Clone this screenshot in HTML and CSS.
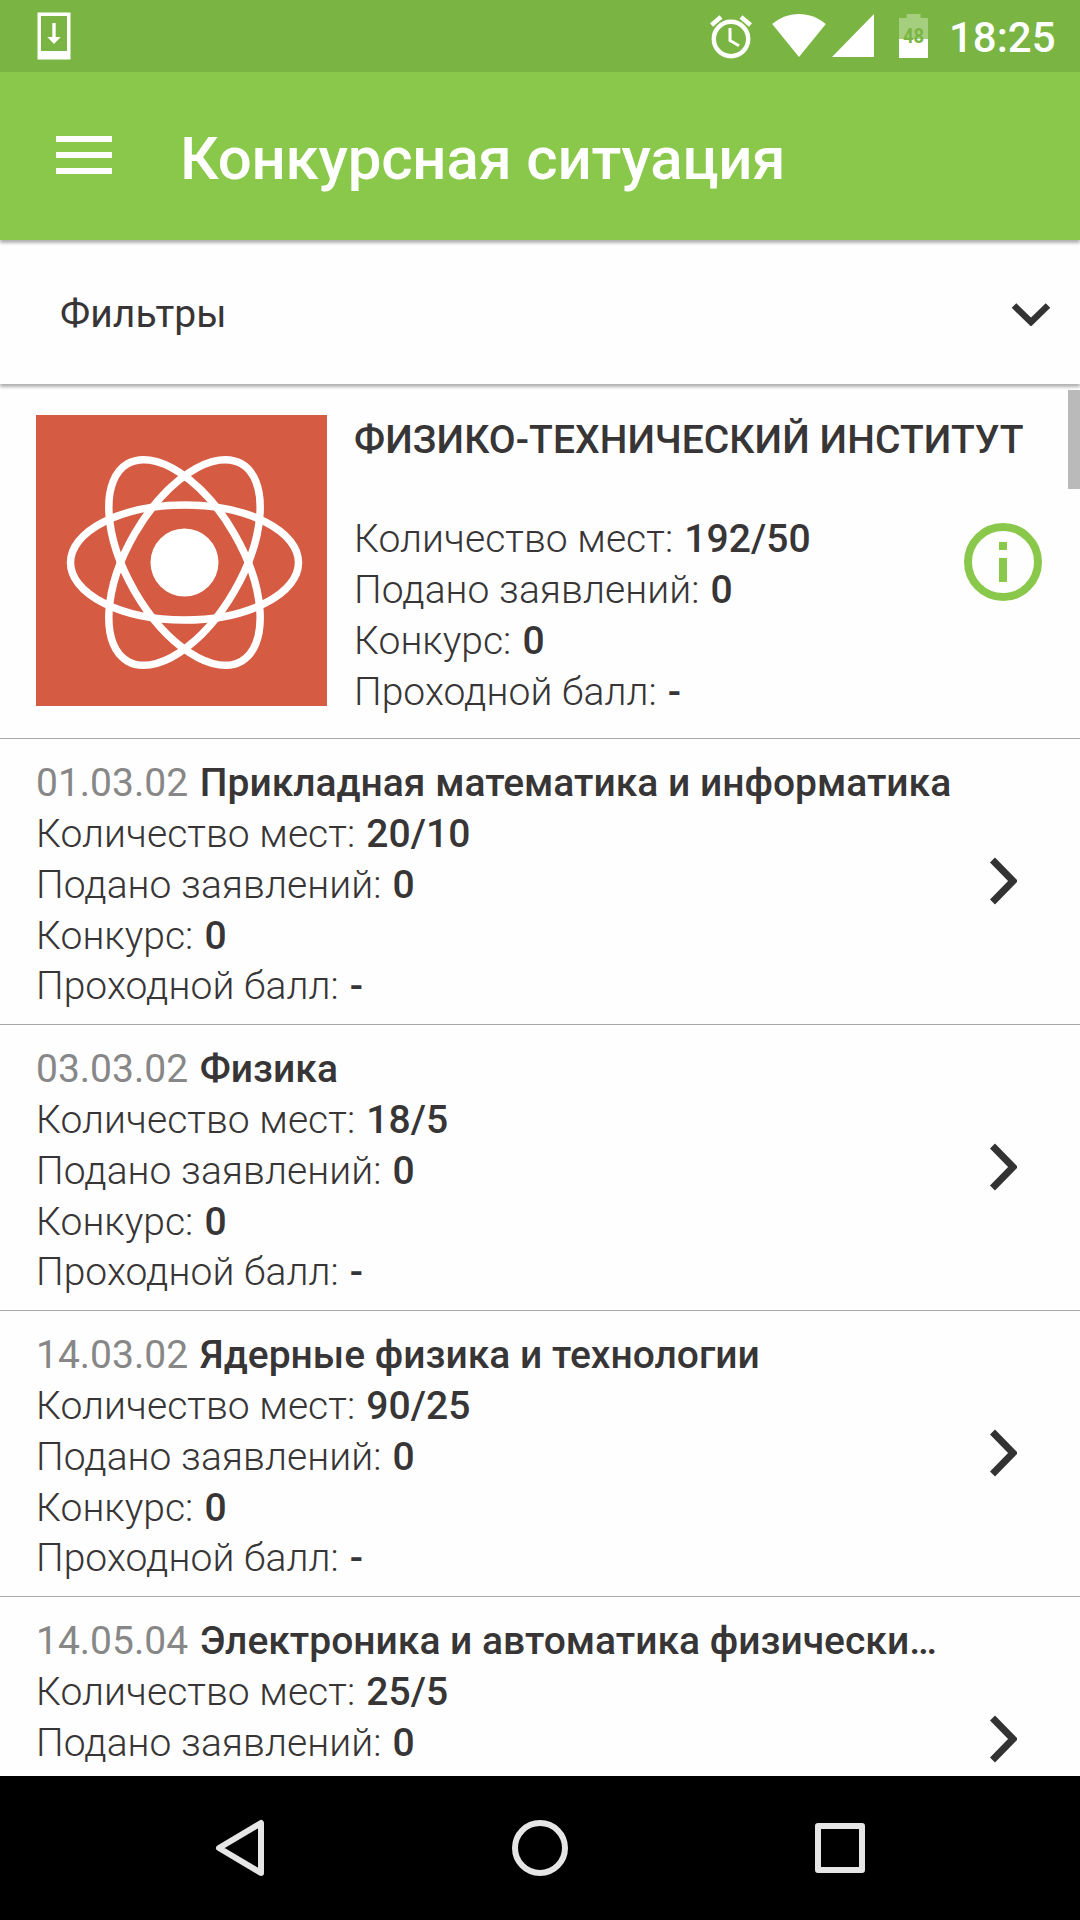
FILE: index.html
```html
<!DOCTYPE html>
<html lang="ru">
<head>
    <meta charset="UTF-8">
    <meta name="viewport" content="width=device-width, initial-scale=1.0">
    <title>Конкурсная ситуация</title>
    <link rel="stylesheet" href="styles.css">
</head>
<body>
    <div class="status-bar">
        <svg class="download" width="34" height="48" viewBox="0 0 34 48">
            <path fill="#fff" fill-rule="evenodd" d="M.5 .5h33v47h-33zM4 4v35h26V4z"/>
            <path fill="#fff" d="M15.3 11h3.4v14h5L17 32l-6.700-7h5z"/>
        </svg>
        <div class="status-icons">
            <svg class="alarm" width="42" height="44" viewBox="0 0 42 44">
                <circle cx="21" cy="24" r="17.200" fill="none" stroke="#fff" stroke-width="4.400"/>
                <path d="M1.500 10 11 2M40.500 10 31 2" fill="none" stroke="#fff" stroke-width="4.500"/>
                <path d="M20 13v12.500l9 5.200" fill="none" stroke="#fff" stroke-width="3"/>
            </svg>
            <svg class="wifi" width="54" height="43" viewBox="0 0 54 43">
                <path fill="#fff" d="M27 43 .2 10C8 3.500 17 0 27 0s19 3.500 26.800 10z"/>
            </svg>
            <svg class="signal" width="42" height="43" viewBox="0 0 42 43">
                <path fill="#fff" d="M0 43h42V0z"/>
            </svg>
            <div class="battery">
                <svg width="29" height="44" viewBox="0 0 29 44">
                    <path fill="#a5cf7f" d="M7.500 0h14v4H29v22H0V4h7.500z"/>
                    <path fill="#fff" d="M0 25h29v19H0z"/>
                </svg>
                <span class="battery-level">48</span>
            </div>
            <span class="clock">18:25</span>
        </div>
    </div>

    <header class="header">
        <div class="menu">
            <span></span>
            <span></span>
            <span></span>
        </div>
        <h1>Конкурсная ситуация</h1>
    </header>

    <div class="filters">
        <span class="filters-label">Фильтры</span>
        <svg width="40" height="24" viewBox="0 0 40 24">
            <path d="M3 3.500 20 20 37 3.500" fill="none" stroke="#333" stroke-width="6.500"/>
        </svg>
    </div>

    <main class="content">
        <div class="scrollbar"></div>
        <section class="institute">
            <svg class="logo" width="291" height="291" viewBox="0 0 291 291">
                <rect width="291" height="291" fill="#d55b43"/>
                <g fill="none" stroke="#fff" stroke-width="7.500">
                    <ellipse cx="148.500" cy="147.500" rx="114" ry="57.500"/>
                    <ellipse cx="148.500" cy="147.500" rx="114" ry="57.500" transform="rotate(60 148.500 147.500)"/>
                    <ellipse cx="148.500" cy="147.500" rx="114" ry="57.500" transform="rotate(120 148.500 147.500)"/>
                </g>
                <circle cx="148.500" cy="147.500" r="34" fill="#fff"/>
            </svg>
            <div class="info">
                <h2>ФИЗИКО-ТЕХНИЧЕСКИЙ ИНСТИТУТ</h2>
                <p>Количество мест: <b>192/50</b></p>
                <p>Подано заявлений: <b>0</b></p>
                <p>Конкурс: <b>0</b></p>
                <p>Проходной балл: <b>-</b></p>
            </div>
            <svg class="info-icon" width="78" height="78" viewBox="0 0 78 78">
                <circle cx="39" cy="39" r="35" fill="none" stroke="#8ac84c" stroke-width="8"/>
                <path fill="#8ac84c" d="M35 19h8v8h-8zM35 35h8v24h-8z"/>
            </svg>
        </section>

        <section class="item">
            <div class="info">
                <h3><span class="code">01.03.02</span> Прикладная математика и информатика</h3>
                <p>Количество мест: <b>20/10</b></p>
                <p>Подано заявлений: <b>0</b></p>
                <p>Конкурс: <b>0</b></p>
                <p>Проходной балл: <b>-</b></p>
            </div>
            <svg class="arrow" width="28" height="48" viewBox="0 0 28 48">
                <path d="M3.500 3 24 24 3.500 45" fill="none" stroke="#333" stroke-width="7"/>
            </svg>
        </section>

        <section class="item">
            <div class="info">
                <h3><span class="code">03.03.02</span> Физика</h3>
                <p>Количество мест: <b>18/5</b></p>
                <p>Подано заявлений: <b>0</b></p>
                <p>Конкурс: <b>0</b></p>
                <p>Проходной балл: <b>-</b></p>
            </div>
            <svg class="arrow" width="28" height="48" viewBox="0 0 28 48">
                <path d="M3.500 3 24 24 3.500 45" fill="none" stroke="#333" stroke-width="7"/>
            </svg>
        </section>

        <section class="item">
            <div class="info">
                <h3><span class="code">14.03.02</span> Ядерные физика и технологии</h3>
                <p>Количество мест: <b>90/25</b></p>
                <p>Подано заявлений: <b>0</b></p>
                <p>Конкурс: <b>0</b></p>
                <p>Проходной балл: <b>-</b></p>
            </div>
            <svg class="arrow" width="28" height="48" viewBox="0 0 28 48">
                <path d="M3.500 3 24 24 3.500 45" fill="none" stroke="#333" stroke-width="7"/>
            </svg>
        </section>

        <section class="item">
            <div class="info">
                <h3><span class="code">14.05.04</span> Электроника и автоматика физически…</h3>
                <p>Количество мест: <b>25/5</b></p>
                <p>Подано заявлений: <b>0</b></p>
            </div>
            <svg class="arrow" width="28" height="48" viewBox="0 0 28 48">
                <path d="M3.500 3 24 24 3.500 45" fill="none" stroke="#333" stroke-width="7"/>
            </svg>
        </section>
    </main>

    <nav class="nav-bar">
        <svg width="60" height="60" viewBox="0 0 60 60">
            <path d="M51 5v50L9 30z" fill="none" stroke="#e6e6e6" stroke-width="6" stroke-linejoin="round"/>
        </svg>
        <svg width="60" height="60" viewBox="0 0 60 60">
            <circle cx="30" cy="30" r="25" fill="none" stroke="#e6e6e6" stroke-width="6"/>
        </svg>
        <svg width="60" height="60" viewBox="0 0 60 60">
            <path d="M8 8h44v44H8z" fill="none" stroke="#e6e6e6" stroke-width="6" stroke-linejoin="round"/>
        </svg>
    </nav>
</body>
</html>
```

FILE: styles.css
```css
* {
    box-sizing: border-box;
}

body {
    margin: 0;
    height: 1920px;
    display: flex;
    flex-direction: column;
    overflow: hidden;
    background-color: #fefefe;
    font-family: Roboto, sans-serif;
    font-size: 39px;
    line-height: 51px;
    color: #373535;
}

h1, h2, h3, p {
    margin: 0;
    white-space: nowrap;
}

svg {
    display: block;
    flex-shrink: 0;
}

.status-bar {
    height: 72px;
    flex-shrink: 0;
    display: flex;
    justify-content: space-between;
    padding: 0 25px 0 37px;
    background-color: #7ab543;
    color: #fff;
}

.download {
    margin-top: 12px;
}

.status-icons {
    display: flex;
    padding-top: 14px;
}

.alarm {
    margin-top: 1px;
    margin-right: 20px;
}

.wifi {
    margin-right: 6px;
}

.signal {
    margin-right: 25px;
}

.battery {
    position: relative;
    margin-right: 21px;
}

.battery-level {
    position: absolute;
    top: 12px;
    left: 0;
    width: 29px;
    text-align: center;
    font-size: 21px;
    line-height: 21px;
    font-weight: 700;
    color: #7ab543;
    transform: scaleX(0.88);
}

.clock {
    width: 106px;
    font-size: 42px;
    line-height: 48px;
    font-weight: 500;
    white-space: nowrap;
}

.header {
    height: 168px;
    flex-shrink: 0;
    display: flex;
    align-items: center;
    padding-left: 56px;
    background-color: #8ac84c;
    color: #fff;
    box-shadow: 0 3px 3px rgba(0, 0, 0, 0.3);
    z-index: 2;
}

.header h1 {
    margin-left: 68px;
    padding-top: 6px;
    font-size: 60px;
    line-height: 70px;
    font-weight: 500;
    letter-spacing: -0.2px;
}

.menu {
    width: 56px;
    display: flex;
    flex-direction: column;
    gap: 10px;
    margin-top: -2px;
}

.menu span {
    height: 6px;
    background-color: #fff;
}

.filters {
    height: 144px;
    flex-shrink: 0;
    display: flex;
    align-items: center;
    justify-content: space-between;
    padding: 0 29px 0 60px;
    background-color: #fefefe;
    box-shadow: 0 3px 3px rgba(0, 0, 0, 0.3);
    z-index: 1;
}

.filters-label {
    padding-top: 4px;
    letter-spacing: 0.1px;
}

.filters svg {
    margin-top: 4px;
}

.content {
    position: relative;
    flex: 1;
    min-height: 0;
    overflow: hidden;
}

.scrollbar {
    position: absolute;
    top: 6px;
    right: 0;
    width: 12px;
    height: 99px;
    background-color: #bababa;
}

.info {
    font-weight: 300;
}

.info p {
    letter-spacing: 0.06px;
}

.info b {
    margin-left: 1.5px;
    font-weight: 500;
}

.institute {
    height: 355px;
    display: flex;
    padding: 31px 38px 0 36px;
    border-bottom: 1px solid #a9a9a9;
}

.institute .info {
    flex: 1;
    min-width: 0;
    margin-left: 27px;
}

.institute h2 {
    margin-bottom: 48px;
    font-size: 39px;
    font-weight: 500;
    letter-spacing: 0.09px;
}

.info-icon {
    margin-top: 108px;
}

.item {
    height: 286px;
    display: flex;
    justify-content: space-between;
    padding: 18.5px 63px 0 36px;
    border-bottom: 1px solid #a9a9a9;
}

.item h3 {
    font-size: 39px;
    font-weight: 500;
}

.item p:nth-child(5) {
    margin-top: -1px;
}

.code {
    margin-right: 2px;
    font-weight: 400;
    color: #878787;
}

.arrow {
    margin-top: 99px;
}

.nav-bar {
    height: 144px;
    flex-shrink: 0;
    display: flex;
    align-items: center;
    justify-content: center;
    gap: 240px;
    background-color: #000;
}
```
